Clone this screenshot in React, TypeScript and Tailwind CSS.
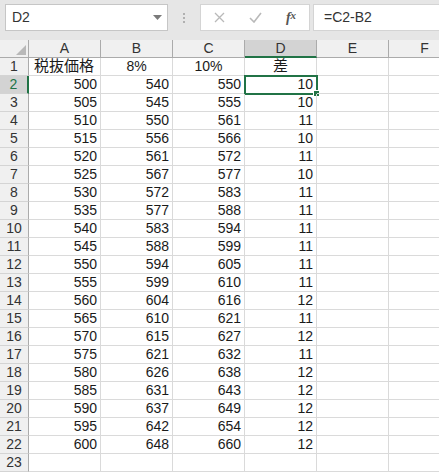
import React from 'react';

const cols = ['A', 'B', 'C', 'D', 'E', 'F'];

const colA = Array.from({ length: 21 }, (_, i) => 500 + i * 5);
const colB = [540, 545, 550, 556, 561, 567, 572, 577, 583, 588, 594, 599, 604, 610, 615, 621, 626, 631, 637, 642, 648];
const colC = [550, 555, 561, 566, 572, 577, 583, 588, 594, 599, 605, 610, 616, 621, 627, 632, 638, 643, 649, 654, 660];

const font = { fontFamily: '"Liberation Sans", "Noto Sans CJK JP", sans-serif' };

const TopBar = () => (
  <div className="h-[40px] bg-[#e6e6e6] flex items-start pt-[4px] pl-[5px]">
    <div className="w-[163px] h-[27px] bg-white border border-[#c6c6c6] flex items-center justify-between pl-[6px] pr-[5px] text-[14px] text-[#333]">
      <span>D2</span>
      <svg width="9" height="5" viewBox="0 0 9 5"><path d="M0 0h9L4.5 5z" fill="#7a7a7a" /></svg>
    </div>
    <div className="w-[32px] flex flex-col items-center justify-center gap-[2px] h-[27px]">
      <span className="w-[2px] h-[2px] bg-[#b0b0b0]" />
      <span className="w-[2px] h-[2px] bg-[#b0b0b0]" />
      <span className="w-[2px] h-[2px] bg-[#b0b0b0]" />
    </div>
    <div className="w-[110px] h-[27px] bg-white border border-[#d4d4d4] flex items-center">
      <div className="w-[36px] flex justify-center">
        <svg width="11" height="11" viewBox="0 0 11 11"><path d="M1 1l9 9M10 1l-9 9" stroke="#b9b9b9" strokeWidth="1.3" /></svg>
      </div>
      <div className="w-[36px] flex justify-center">
        <svg width="13" height="11" viewBox="0 0 13 11"><path d="M1 6l4 4 7-9" stroke="#b9b9b9" strokeWidth="1.6" fill="none" /></svg>
      </div>
      <div className="w-[36px] flex justify-center text-[14px] italic text-[#555]" style={{ fontFamily: '"Liberation Serif", serif' }}>
        <span className="font-bold">f</span><span className="text-[11px] font-bold">x</span>
      </div>
    </div>
    <div className="ml-[3px] flex-1 h-[27px] bg-white border border-[#d4d4d4] border-r-0 flex items-center pl-[10px] text-[14px] text-[#333]">
      =C2-B2
    </div>
  </div>
);

const HeaderRow = () => (
  <div className="flex h-[18px]">
    <div className="w-[29px] shrink-0 bg-[#f0f0f0] border-r border-b border-[#ababab] relative">
      <div className="absolute right-[2px] bottom-[2px] w-0 h-0 border-l-[10px] border-l-transparent border-b-[10px] border-b-[#b8b8b8]" />
    </div>
    {cols.map((c) => {
      const sel = c === 'D';
      return (
        <div
          key={c}
          className={`w-[72px] shrink-0 flex items-center justify-center text-[14px] border-r ${
            sel
              ? 'bg-[#d3d3d3] text-[#333] border-b-2 border-b-[#217346] border-r-[#ababab]'
              : 'bg-[#f0f0f0] text-[#333] border-b border-[#ababab]'
          }`}
        >
          {c}
        </div>
      );
    })}
  </div>
);

type RowProps = { n: number; cells: (string | number)[]; align: ('l' | 'r' | 'c')[] };

const Row = ({ n, cells, align }: RowProps) => {
  const sel = n === 2;
  return (
    <div className="flex h-[18px]">
      <div
        className={`w-[29px] shrink-0 flex items-center justify-center text-[14px] border-b border-[#d4d4d4] ${
          sel ? 'bg-[#d3d3d3] text-[#217346] border-r-2 border-r-[#217346]' : 'bg-[#f0f0f0] text-[#333] border-r border-r-[#ababab]'
        }`}
      >
        {n}
      </div>
      {cols.map((c, i) => {
        const v = cells[i];
        const a = align[i];
        const isSel = sel && c === 'D';
        const cjk = typeof v === 'string' && /[^\x00-\x7f]/.test(v);
        return (
          <div
            key={c}
            className={`w-[72px] shrink-0 relative flex items-center text-[#1a1a1a] border-r border-b border-[#dadada] px-[3px] ${
              cjk ? 'text-[15px]' : 'text-[14px]'
            } ${a === 'r' ? 'justify-end' : a === 'c' ? 'justify-center' : 'justify-start pl-[5px]'}`}
          >
            {v !== undefined && v !== '' && <span>{v}</span>}
            {isSel && (
              <>
                <div className="absolute -left-[1px] -top-[1px] w-[74px] h-[20px] border-2 border-[#217346]" />
                <div className="absolute -right-[4px] -bottom-[4px] w-[7px] h-[7px] bg-[#217346] border border-white" />
              </>
            )}
          </div>
        );
      })}
    </div>
  );
};

export default function App() {
  return (
    <div className="w-[439px] h-[473px] overflow-hidden bg-white select-none" style={font}>
      <TopBar />
      <div className="overflow-hidden">
        <HeaderRow />
        <Row n={1} cells={['税抜価格', '8%', '10%', '差', '', '']} align={['l', 'c', 'c', 'c', 'l', 'l']} />
        {colA.map((a, i) => (
          <Row
            key={i}
            n={i + 2}
            cells={[a, colB[i], colC[i], colC[i] - colB[i], '', '']}
            align={['r', 'r', 'r', 'r', 'r', 'r']}
          />
        ))}
        <Row n={23} cells={['', '', '', '', '', '']} align={['r', 'r', 'r', 'r', 'r', 'r']} />
      </div>
    </div>
  );
}
